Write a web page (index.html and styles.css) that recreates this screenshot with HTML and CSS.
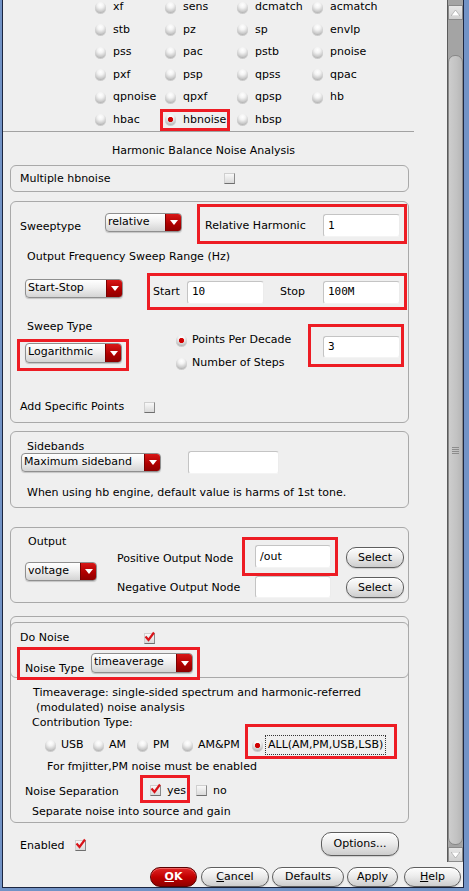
FILE: index.html
```html
<!DOCTYPE html>
<html>
<head>
<meta charset="utf-8">
<link rel="stylesheet" href="styles.css">
</head>
<body>
<div class="window">
 <div class="client">
  <div class="main">
   <div class="viewport">
    <div class="radio-grid">
     <div class="ri"><span class="rd"></span><span>xf</span></div>
     <div class="ri"><span class="rd"></span><span>sens</span></div>
     <div class="ri"><span class="rd"></span><span>dcmatch</span></div>
     <div class="ri"><span class="rd"></span><span>acmatch</span></div>
     <div class="ri"><span class="rd"></span><span>stb</span></div>
     <div class="ri"><span class="rd"></span><span>pz</span></div>
     <div class="ri"><span class="rd"></span><span>sp</span></div>
     <div class="ri"><span class="rd"></span><span>envlp</span></div>
     <div class="ri"><span class="rd"></span><span>pss</span></div>
     <div class="ri"><span class="rd"></span><span>pac</span></div>
     <div class="ri"><span class="rd"></span><span>pstb</span></div>
     <div class="ri"><span class="rd"></span><span>pnoise</span></div>
     <div class="ri"><span class="rd"></span><span>pxf</span></div>
     <div class="ri"><span class="rd"></span><span>psp</span></div>
     <div class="ri"><span class="rd"></span><span>qpss</span></div>
     <div class="ri"><span class="rd"></span><span>qpac</span></div>
     <div class="ri"><span class="rd"></span><span>qpnoise</span></div>
     <div class="ri"><span class="rd"></span><span>qpxf</span></div>
     <div class="ri"><span class="rd"></span><span>qpsp</span></div>
     <div class="ri"><span class="rd"></span><span>hb</span></div>
     <div class="ri"><span class="rd"></span><span>hbac</span></div>
     <div class="ri"><span class="hl hl-hbnoise"><span class="rd on"></span><span>hbnoise</span></span></div>
     <div class="ri"><span class="rd"></span><span>hbsp</span></div>
     <div class="ri"></div>
    </div>
    <div class="sep"></div>
    <div class="title">Harmonic Balance Noise Analysis</div>

    <div class="box box-multi">
     <span class="lbl-multi">Multiple hbnoise</span><span class="cb"></span>
    </div>

    <div class="box box-sweep">
     <div class="r-sweep1">
      <span class="lbl-sweeptype">Sweeptype</span>
      <div class="dd dd-relative"><span class="dd-text">relative</span><span class="dd-btn"><svg width="8" height="5" viewBox="0 0 8 5"><path d="M0 0H8L4 5Z" fill="#fff"/></svg></span></div>
      <div class="hl hl-relharm"><span>Relative Harmonic</span><div class="inp inp-std push">1</div></div>
     </div>
     <div class="t-ofsr">Output Frequency Sweep Range (Hz)</div>
     <div class="r-sweep3">
      <div class="dd dd-ss"><span class="dd-text">Start-Stop</span><span class="dd-btn"><svg width="8" height="5" viewBox="0 0 8 5"><path d="M0 0H8L4 5Z" fill="#fff"/></svg></span></div>
      <div class="hl hl-startstop">
       <span class="lbl-start">Start</span><div class="inp inp-std">10</div>
       <span class="lbl-stop">Stop</span><div class="inp inp-std push">100M</div>
      </div>
     </div>
     <div class="r-sweep4">
      <div class="c-stype">
       <div class="t-stype">Sweep Type</div>
       <div class="hl hl-log"><div class="dd dd-log"><span class="dd-text">Logarithmic</span><span class="dd-btn"><svg width="8" height="5" viewBox="0 0 8 5"><path d="M0 0H8L4 5Z" fill="#fff"/></svg></span></div></div>
      </div>
      <div class="c-radios">
       <div class="rline"><span class="rd on"></span><span>Points Per Decade</span></div>
       <div class="rline rline2"><span class="rd"></span><span>Number of Steps</span></div>
      </div>
      <div class="hl hl-ppd"><div class="inp inp-ppd">3</div></div>
     </div>
     <div class="r-addpts"><span class="lbl-addpts">Add Specific Points</span><span class="cb"></span></div>
    </div>

    <div class="box box-side">
     <div class="t-sidebands">Sidebands</div>
     <div class="r-side">
      <div class="dd dd-side"><span class="dd-text">Maximum sideband</span><span class="dd-btn"><svg width="8" height="5" viewBox="0 0 8 5"><path d="M0 0H8L4 5Z" fill="#fff"/></svg></span></div>
      <div class="inp inp-side"></div>
     </div>
     <div class="t-when">When using hb engine, default value is harms of 1st tone.</div>
    </div>

    <div class="box box-out">
     <div class="oc1">
      <div class="t-output">Output</div>
      <div class="dd dd-volt"><span class="dd-text">voltage</span><span class="dd-btn"><svg width="8" height="5" viewBox="0 0 8 5"><path d="M0 0H8L4 5Z" fill="#fff"/></svg></span></div>
     </div>
     <div class="oc2">
      <div class="t-pos">Positive Output Node</div>
      <div class="t-neg">Negative Output Node</div>
     </div>
     <div class="oc3">
      <div class="hl hl-pos"><div class="inp inp-node">/out</div></div>
      <div class="inp inp-node inp-neg"></div>
     </div>
     <div class="oc4">
      <div class="btn btn-sel">Select</div>
      <div class="btn btn-sel btn-sel2">Select</div>
     </div>
    </div>

    <div class="box box-noise">
     <div class="inner-noise">
      <div class="r-donoise"><span class="lbl-donoise">Do Noise</span><span class="cb on"><svg width="11" height="11" viewBox="0 0 11 11"><path d="M1.5 4.5 L4.5 8 L10 0.5" stroke="#d8141a" stroke-width="2.2" fill="none"/></svg></span></div>
      <div class="hl hl-ntype">
       <span class="lbl-ntype">Noise Type</span>
       <div class="dd dd-ntype"><span class="dd-text">timeaverage</span><span class="dd-btn"><svg width="8" height="5" viewBox="0 0 8 5"><path d="M0 0H8L4 5Z" fill="#fff"/></svg></span></div>
      </div>
     </div>
     <div class="t-ta">Timeaverage: single-sided spectrum and harmonic-referred</div>
     <div class="t-mod">(modulated) noise analysis</div>
     <div class="t-contrib">Contribution Type:</div>
     <div class="r-contrib">
      <div class="ci ci-usb"><span class="rd"></span><span>USB</span></div>
      <div class="ci ci-am"><span class="rd"></span><span>AM</span></div>
      <div class="ci ci-pm"><span class="rd"></span><span>PM</span></div>
      <div class="ci ci-ampm"><span class="rd"></span><span>AM&amp;PM</span></div>
      <div class="hl ci hl-all"><span class="rd on"></span><span class="focus">ALL(AM,PM,USB,LSB)</span></div>
     </div>
     <div class="t-fm">For fmjitter,PM noise must be enabled</div>
     <div class="r-nsep">
      <span class="lbl-nsep">Noise Separation</span>
      <div class="hl hl-yes"><span class="cb on"><svg width="11" height="11" viewBox="0 0 11 11"><path d="M1.5 4.5 L4.5 8 L10 0.5" stroke="#d8141a" stroke-width="2.2" fill="none"/></svg></span><span class="cb-lbl">yes</span></div>
      <span class="cb cb-no"></span><span class="cb-lbl">no</span>
     </div>
     <div class="t-sepnoise">Separate noise into source and gain</div>
    </div>

    <div class="r-enabled">
     <span class="lbl-enabled">Enabled</span>
     <span class="cb on cb-en"><svg width="11" height="11" viewBox="0 0 11 11"><path d="M1.5 4.5 L4.5 8 L10 0.5" stroke="#d8141a" stroke-width="2.2" fill="none"/></svg></span>
     <div class="btn btn-options">Options...</div>
    </div>
   </div>
   <div class="scrollbar">
    <div class="sb-btn"><svg width="9" height="6" viewBox="0 0 9 6"><path d="M0 6H9L4.5 0Z" fill="#fff" stroke="#9a9a9a" stroke-width="0.6"/></svg></div>
    <div class="sb-track">
     <div class="sb-thumb"><svg width="7" height="7" viewBox="0 0 7 7"><path d="M0 0.5H7M0 2.5H7M0 4.5H7M0 6.5H7" stroke="#8c8c8c" stroke-width="1"/></svg></div>
    </div>
    <div class="sb-btn"><svg width="9" height="6" viewBox="0 0 9 6"><path d="M0 0H9L4.5 6Z" fill="#fff" stroke="#9a9a9a" stroke-width="0.6"/></svg></div>
   </div>
  </div>
  <div class="buttons">
   <div class="btn btn-ok"><span><u>O</u>K</span></div>
   <div class="btn btn-cancel"><span><u>C</u>ancel</span></div>
   <div class="btn btn-defaults">Defaults</div>
   <div class="btn btn-apply">Apply</div>
   <div class="btn btn-help"><span><u>H</u>elp</span></div>
  </div>
 </div>
</div>
</body>
</html>
```
FILE: styles.css
```css
* { box-sizing: border-box; }
body { margin: 0; font-family: "DejaVu Sans", sans-serif; font-size: 11px; color: #000; line-height: 14px; }

.window { width: 469px; height: 891px; background: #7293c6; padding: 0 5px 3px 2px; display: flex; flex-direction: column; }
.client { flex: 1; display: flex; flex-direction: column; background: #efefef; border: 1px solid #1c2640; border-top: none; }
.main { height: 862px; display: flex; }
.viewport { width: 445px; border-right: 1px solid #5a5a5a; overflow: hidden; }

/* radio grid */
.radio-grid { display: grid; grid-template-columns: 70px 72px 75px auto; grid-auto-rows: 22.5px; margin-top: -4px; padding-left: 92px; }
.ri { display: flex; align-items: center; gap: 7px; }
.rd { width: 11px; height: 11px; border-radius: 50%; flex: none;
  background: radial-gradient(circle at 50% 28%, #ffffff 0, #f3f3f3 30%, #c8c8c8 68%, #8e8e8e 100%);
  box-shadow: 0 1px 0 rgba(0,0,0,0.15); }
.rd.on { background: radial-gradient(circle at 50% 50%, #c80000 0, #d40000 2.2px, rgba(0,0,0,0) 3px),
  radial-gradient(circle at 50% 28%, #ffffff 0, #f3f3f3 30%, #c8c8c8 68%, #8e8e8e 100%); }

.hl { outline: 3px solid #ed1c24; }
.hl-hbnoise { display: inline-flex; align-items: center; gap: 7px; height: 16px; padding: 0 1px 0 2px; margin-left: -2px; }

.sep { width: 411px; border-top: 1px solid #a2a2a2; }
.title { margin-top: 12px; padding-left: 109px; }

/* boxes */
.box { margin-left: 7px; width: 399px; border: 1px solid #a9a9a9; border-radius: 6px; }
.box-multi { margin-top: 7px; height: 27px; display: flex; align-items: center; padding-left: 9px; }
.lbl-multi { width: 204px; }

.cb { width: 11px; height: 11px; flex: none; display: flex; overflow: visible;
  background: linear-gradient(#f8f8f8, #dadada);
  border: 1px solid; border-color: #cfcfcf #8a8a8a #6e6e6e #cfcfcf; }
.cb svg { margin: -2px 0 0 -1px; overflow: visible; flex: none; }

/* dropdown */
.dd { display: flex; height: 19px; border: 1px solid #8f8f8f; border-radius: 4px; overflow: hidden;
  background: linear-gradient(#ffffff, #f0f0f0 45%, #d4d4d4); box-shadow: 0 1px 1px rgba(0,0,0,0.18); }
.dd-text { flex: 1; padding-left: 2px; line-height: 16px; white-space: nowrap; }
.dd-btn { width: 16px; flex: none; display: flex; align-items: center; justify-content: center;
  background: linear-gradient(#d81818, #b00000 55%, #8e0000); border-left: 1px solid #7a0000; }

/* input */
.inp { background: #fff; border: 1px solid; border-color: #c4c4c4 #ececec #f4f4f4 #c4c4c4; border-radius: 3px;
  font-family: "DejaVu Sans Mono", monospace; font-size: 11px; padding-left: 4px; display: flex; align-items: center; }
.inp-std { width: 77px; height: 23px; flex: none; }
.push { margin-left: auto; margin-right: 4px; }

/* sweep */
.box-sweep { margin-top: 9px; height: 222px; }
.r-sweep1 { display: flex; align-items: flex-start; height: 34px; margin-top: 5px; padding-left: 9px; }
.lbl-sweeptype { width: 85px; margin-top: 13px; }
.dd-relative { width: 77px; margin-top: 6px; }
.hl-relharm { margin-left: 18px; width: 204px; height: 34px; display: flex; align-items: center; padding: 3px 0 0 5px; }
.t-ofsr { margin-top: 9px; padding-left: 16px; }
.r-sweep3 { display: flex; align-items: flex-start; height: 31px; margin-top: 12px; padding-left: 14px; }
.dd-ss { width: 98px; margin-top: 3px; }
.hl-startstop { margin-left: 27px; width: 254px; height: 31px; display: flex; align-items: center; padding: 1px 0 0 3px; }
.lbl-start { width: 34px; }
.lbl-stop { margin-left: 16px; }
.r-sweep4 { display: flex; align-items: flex-start; margin-top: 13px; }
.c-stype { width: 164px; }
.t-stype { padding-left: 16px; }
.hl-log { margin-top: 8px; margin-left: 9px; width: 106px; height: 26px; padding: 1px 0 0 5px; }
.dd-log { width: 97px; height: 20px; }
.c-radios { width: 136px; padding-top: 13px; padding-left: 1px; }
.rline { display: flex; align-items: center; gap: 5px; height: 14px; }
.rline2 { margin-top: 9px; }
.hl-ppd { margin-top: 7px; width: 90px; height: 37px; display: flex; align-items: center; padding: 2px 0 0 12px; }
.inp-ppd { width: 77px; height: 22px; }
.r-addpts { display: flex; align-items: center; height: 14px; margin-top: 30px; padding-left: 9px; }
.lbl-addpts { width: 124px; }

/* sidebands */
.box-side { margin-top: 8px; height: 77px; }
.t-sidebands { margin-top: 8px; padding-left: 16px; }
.r-side { display: flex; align-items: center; height: 23px; margin-top: -3px; padding-left: 10px; }
.dd-side { width: 140px; }
.inp-side { width: 91px; height: 23px; margin-left: 27px; }
.t-when { margin-top: 12px; padding-left: 16px; }

/* output */
.box-out { margin-top: 19px; height: 76px; display: flex; align-items: flex-start; }
.oc1 { width: 106px; }
.t-output { margin-top: 7px; padding-left: 17px; }
.dd-volt { width: 72px; margin-top: 13px; margin-left: 14px; }
.oc2 { width: 128px; }
.t-pos { margin-top: 24px; }
.t-neg { margin-top: 15px; }
.oc3 { width: 101px; }
.hl-pos { margin-top: 12px; width: 90px; height: 33px; display: flex; align-items: center; padding-left: 10px; }
.inp-node { width: 76px; height: 23px; font-family: "DejaVu Sans", sans-serif; }
.inp-neg { margin-top: 3px; margin-left: 10px; height: 22px; }
.btn { display: flex; align-items: center; justify-content: center; border: 1px solid #5e5e5e; border-radius: 10px;
  background: linear-gradient(#fdfdfd, #ececec 45%, #cdcdcd); box-shadow: inset 0 1px 0 #fff, 0 1px 1px rgba(0,0,0,0.15); white-space: nowrap; }
.btn-sel { width: 58px; height: 21px; margin-top: 19px; }
.btn-sel2 { margin-top: 9px; }

/* noise */
.box-noise { margin-top: 13px; height: 207px; }
.inner-noise { margin: 5px -1px 0; height: 56px; border: 1px solid #a9a9a9; border-radius: 6px; }
.r-donoise { display: flex; align-items: center; height: 14px; margin-top: 8px; padding-left: 9px; }
.lbl-donoise { width: 124px; }
.hl-ntype { margin-top: 5px; margin-left: 9px; width: 177px; height: 27px; display: flex; align-items: flex-start; padding-left: 5px; }
.lbl-ntype { margin-top: 12px; }
.dd-ntype { width: 102px; height: 20px; margin-top: 3px; margin-left: auto; margin-right: 4px; }
.t-ta { margin-top: 7px; padding-left: 22px; line-height: 15px; }
.t-mod { padding-left: 25px; line-height: 15px; }
.t-contrib { margin-top: 1px; padding-left: 21px; }
.r-contrib { display: flex; height: 29px; margin-top: -3px; padding-left: 34px; }
.ci { display: flex; align-items: center; gap: 5px; height: 29px; padding-top: 7px; flex: none; }
.ci-usb { width: 48px; }
.ci-am { width: 44px; }
.ci-pm { width: 45px; }
.ci-ampm { width: 66px; }
.hl-all { padding-left: 4px; padding-right: 8px; gap: 2px; }
.focus { border: 1px dotted #333; height: 20px; padding: 0 2px; display: flex; align-items: center; }
.t-fm { margin-top: 4px; padding-left: 36px; }
.r-nsep { display: flex; align-items: center; height: 22px; margin-top: 4px; }
.lbl-nsep { width: 132px; padding-left: 14px; margin-top: 6px; }
.hl-yes { width: 44px; height: 22px; display: flex; align-items: center; padding: 2px 0 0 7px; }
.cb-lbl { margin-left: 6px; margin-top: 1px; }
.cb-no { margin-left: 9px; margin-top: 2px; }
.r-nsep > .cb-lbl { margin-top: 3px; }
.t-sepnoise { margin-top: 5px; padding-left: 21px; }

/* enabled */
.r-enabled { display: flex; align-items: center; height: 24px; margin-top: 9px; padding-left: 17px; }
.lbl-enabled { width: 55px; margin-top: 4px; }
.cb-en { margin-top: 2px; }
.btn-options { width: 78px; height: 24px; margin-left: auto; margin-right: 48px; }

/* scrollbar */
.scrollbar { width: 15px; display: flex; flex-direction: column; padding-top: 5px; background: #a4a4a4; }
.sb-btn { height: 15px; flex: none; display: flex; align-items: center; justify-content: center;
  background: linear-gradient(#e6e6e6, #cfcfcf); border: 1px solid #8a8a8a; }
.sb-track { flex: 1; padding: 35px 0 2px; display: flex; }
.sb-thumb { flex: 1; border: 1px solid #888; border-radius: 7px; background: linear-gradient(to right, #cdcdcd, #c2c2c2 60%, #b6b6b6);
  display: flex; align-items: center; justify-content: center; }

/* bottom buttons */
.buttons { flex: 1; display: flex; align-items: flex-start; padding-top: 5px; padding-left: 147px; }
.buttons .btn { height: 20px; }
.btn-ok { width: 47px; background: linear-gradient(#e02626, #c20000 50%, #8e0000); border-color: #5a0000; color: #fff; font-weight: bold; box-shadow: inset 0 1px 0 #f06060; }
.btn-cancel { width: 68px; margin-left: 4px; }
.btn-defaults { width: 72px; margin-left: 3px; }
.btn-apply { width: 51px; margin-left: 3px; }
.btn-help { width: 57px; margin-left: 6px; }
```
